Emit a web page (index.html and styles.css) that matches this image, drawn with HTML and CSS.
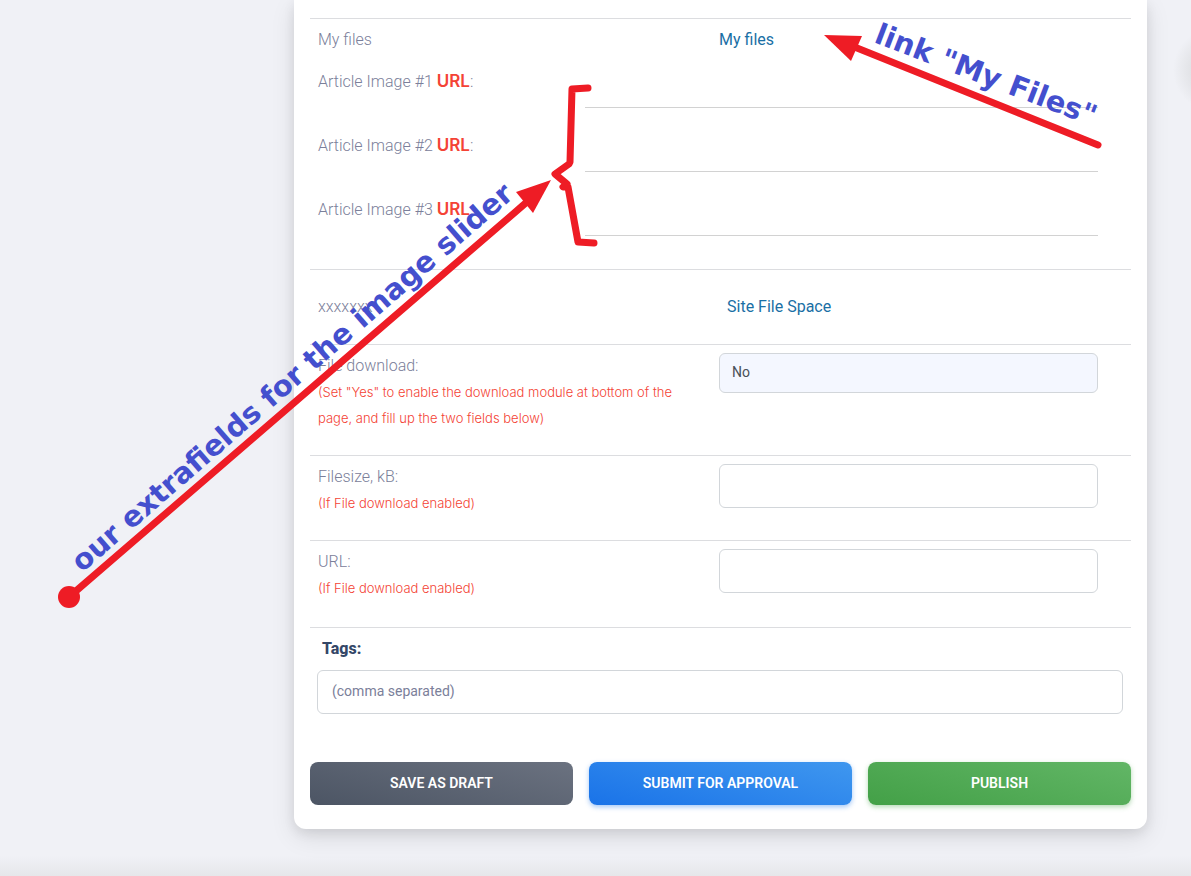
FILE: index.html
```html
<!DOCTYPE html>
<html lang="en">
<head>
<meta charset="utf-8">
<meta name="viewport" content="width=device-width, initial-scale=1">
<title>Submit article</title>
<link rel="stylesheet" href="styles.css">
</head>
<body>
<main class="page">
  <form class="card">
    <div class="row row-links">
      <span>My files</span>
      <a href="#files">My files</a>
    </div>
    <div class="images">
      <div class="image-row"><label for="img1">Article Image #1 <b>URL</b>:</label><input id="img1" class="line-input" type="text"></div>
      <div class="image-row"><label for="img2">Article Image #2 <b>URL</b>:</label><input id="img2" class="line-input" type="text"></div>
      <div class="image-row"><label for="img3">Article Image #3 <b>URL</b>:</label><input id="img3" class="line-input" type="text"></div>
    </div>
    <div class="row row-space">
      <span>xxxxxxx</span>
      <a class="space-link" href="#space">Site File Space</a>
    </div>
    <div class="row">
      <label for="download">File download:<small>(Set "Yes" to enable the download module at bottom of the page, and fill up the two fields below)</small></label>
      <select id="download" class="field select"><option>No</option><option>Yes</option></select>
    </div>
    <div class="row">
      <label for="size">Filesize, kB:<small>(If File download enabled)</small></label>
      <input id="size" class="field" type="text">
    </div>
    <div class="row">
      <label for="url">URL:<small>(If File download enabled)</small></label>
      <input id="url" class="field" type="text">
    </div>
    <div class="tags">
      <label for="tags">Tags:</label>
      <input id="tags" class="field" type="text" placeholder="(comma separated)">
    </div>
    <div class="actions">
      <button class="btn draft" type="button">SAVE AS DRAFT</button>
      <button class="btn submit" type="button">SUBMIT FOR APPROVAL</button>
      <button class="btn publish" type="button">PUBLISH</button>
    </div>
  </form>
</main>
<svg class="notes" width="1191" height="876" viewBox="0 0 1191 876">
  <g fill="none" stroke="#ee1c25" stroke-width="7" stroke-linecap="round" stroke-linejoin="round">
    <path d="M69 597 528 201"/>
    <path d="M1098 145 852 46"/>
    <path d="M588 88 572 89 570 162 569 164 555 174 567 184 563 187 568 187 578 242 594 243"/>
  </g>
  <g fill="#ee1c25">
    <circle cx="69" cy="597" r="11"/>
    <path d="M551 180 516 192 533 213Z"/>
    <path d="M824 35 862 36 851 61Z"/>
  </g>
  <g class="note-text">
    <text transform="translate(82 573) rotate(-41)">our extrafields for the image slider</text>
    <text transform="translate(873 42) rotate(21)">link "My Files"</text>
  </g>
</svg>
</body>
</html>
```
FILE: styles.css
```css
* { box-sizing: border-box; }
body {
  margin: 0;
  background:
    radial-gradient(circle at calc(100% + 24px) 70px, #dcdde0 16px, #dcdde000 42px),
    linear-gradient(to top, #e6e7ea, #e6e7ea00 20px),
    #f0f1f6;
  color: #7b809a;
  font: 300 16px/26px Roboto, sans-serif;
}
.page { padding: 0 44px 47px 294px; }
.card {
  padding: 18px 16px 24px;
  background: #fff;
  border-radius: 0 0 12px 12px;
  box-shadow: 0 8px 24px rgba(0, 0, 0, .1), 0 4px 12px rgba(0, 0, 0, .08);
}
.row {
  display: grid;
  grid-template-columns: 1fr 1fr;
  column-gap: 22px;
  align-items: start;
  padding: 8px 33px 24px 8px;
  border-top: 1px solid #dcdde0;
}
.row-links { padding-bottom: 11px; }
.row-space { padding-top: 24px; }
.space-link { padding-left: 8px; }
a { color: #1a6fa5; font-weight: 400; text-decoration: none; }
.images { padding: 0 33px 13px 8px; }
.image-row {
  display: grid;
  grid-template-columns: 1fr 2fr;
  column-gap: 10px;
  padding-bottom: 20px;
}
.image-row label { padding-top: 5px; }
b { color: #f44335; font: 600 17px/20px Inter, sans-serif; }
.line-input {
  width: 100%;
  height: 44px;
  border: 0;
  border-bottom: 1px solid #d2d2d2;
  background: transparent;
}
small {
  display: block;
  color: #f44335;
  font-family: Inter, sans-serif;
  font-size: 13px;
  font-weight: 300;
}
.field {
  display: block;
  width: 100%;
  height: 44px;
  padding: 0 14px 2px;
  border: 1px solid #d2d6da;
  border-radius: 6px;
  background: #fff;
  color: #495057;
  font: 400 14px/20px Roboto, sans-serif;
}
.field::placeholder { color: #7b809a; opacity: 1; }
.select { height: 40px; padding: 0 12px 2px; appearance: none; background: #f4f7ff; }
.tags { margin-top: 2px; padding: 8px 8px 0 7px; border-top: 1px solid #dcdde0; }
.tags label {
  display: block;
  padding: 0 5px;
  margin-bottom: 8px;
  color: #344767;
  font-weight: 800;
}
.actions {
  display: grid;
  grid-template-columns: repeat(3, 1fr);
  gap: 16px;
  margin-top: 48px;
}
.btn {
  height: 43px;
  padding: 0 8px 2px;
  border: 0;
  border-radius: 8px;
  color: #fff;
  font: 600 14px/20px Roboto, sans-serif;
}
.draft { background: linear-gradient(15deg, #4c5564, #6b7280); }
.submit { background: linear-gradient(15deg, #1a73e8, #3f97ef); box-shadow: 0 2px 5px #1a73e866; }
.publish { background: linear-gradient(15deg, #43a047, #62b666); box-shadow: 0 2px 5px #43a04766; }
.notes { position: absolute; top: 0; left: 0; pointer-events: none; }
.note-text { fill: #444fce; font: 700 29px "DejaVu Sans", sans-serif; }
```
